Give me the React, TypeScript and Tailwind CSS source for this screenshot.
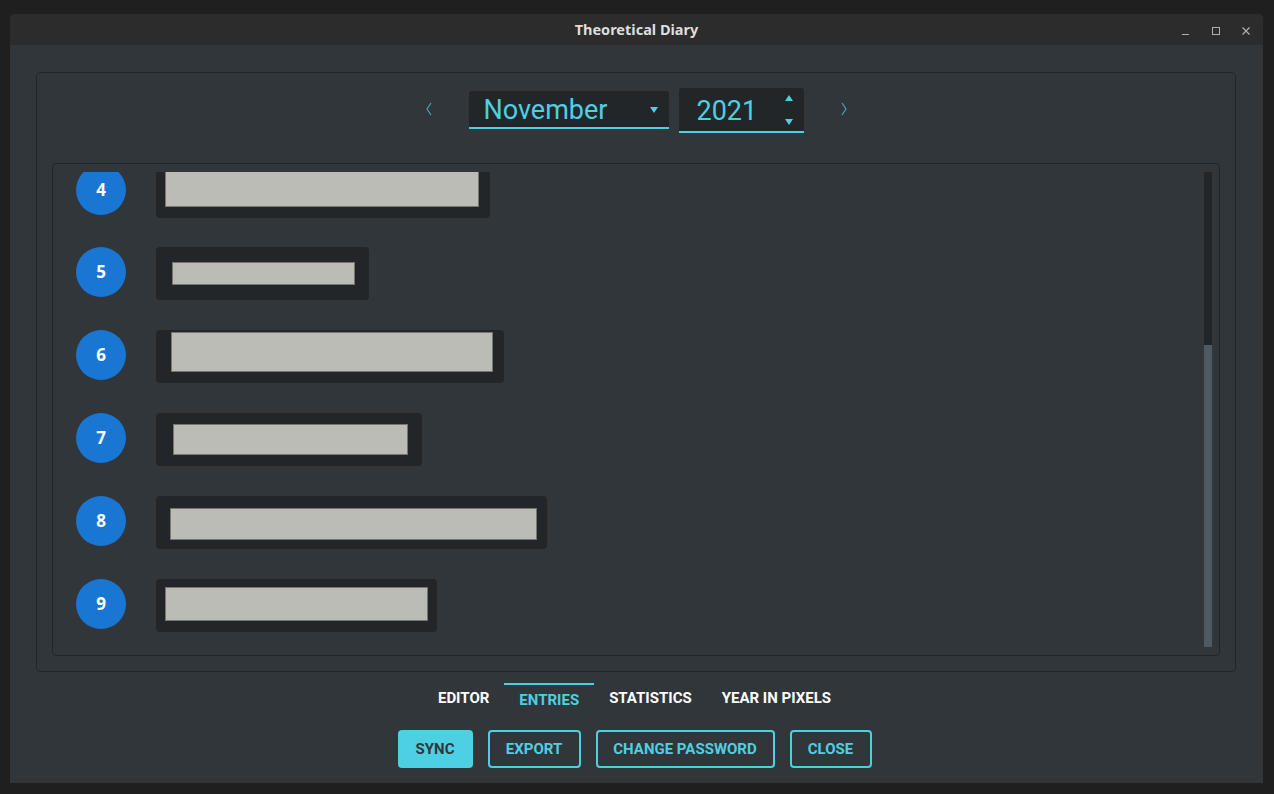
import React from "react";

const rows = [
  { n: 4, w: 334, rl: 9, rw: 314, rt: 6, rh: 36, mt: -7 },
  { n: 5, w: 213, rl: 16, rw: 183, rt: 15, rh: 23, mt: 29 },
  { n: 6, w: 348, rl: 15, rw: 322, rt: 2, rh: 40, mt: 30 },
  { n: 7, w: 266, rl: 17, rw: 235, rt: 11, rh: 31, mt: 30 },
  { n: 8, w: 391, rl: 14, rw: 367, rt: 12, rh: 32, mt: 30 },
  { n: 9, w: 281, rl: 9, rw: 263, rt: 8, rh: 34, mt: 30 },
];

const buttons = [
  { t: "SYNC", w: 75, filled: true },
  { t: "EXPORT", w: 93, filled: false },
  { t: "CHANGE PASSWORD", w: 179, filled: false },
  { t: "CLOSE", w: 82, filled: false },
];

const roboto = { fontFamily: "Roboto, 'Noto Sans', sans-serif" };

export default function App() {
  return (
    <div className="w-[1274px] h-[794px] bg-[#1f1f1f] pt-[14px] pl-[10px] overflow-hidden" style={roboto}>
      <div className="w-[1253px] h-[769px] flex flex-col rounded-t-[5px] overflow-hidden bg-[#31363b]">
        {/* Title bar */}
        <div className="h-[31px] bg-[#2c2c2c] relative flex items-center justify-center shrink-0">
          <span
            className="text-[14.5px] font-bold text-[#dedede] mt-[1px]"
            style={{ fontFamily: "'Noto Sans', 'DejaVu Sans', sans-serif" }}
          >
            Theoretical Diary
          </span>
          <div className="absolute right-[12px] top-0 h-full flex items-center gap-[20px] pt-[2px]">
            <svg width="10" height="10" viewBox="0 0 10 10">
              <line x1="1" y1="8.5" x2="8" y2="8.5" stroke="#b0b0b0" strokeWidth="1" />
            </svg>
            <svg width="10" height="10" viewBox="0 0 10 10">
              <rect x="1.5" y="1.5" width="7" height="7" fill="none" stroke="#b0b0b0" strokeWidth="1" />
            </svg>
            <svg width="10" height="10" viewBox="0 0 10 10">
              <path d="M1.5 1.5 L8.5 8.5 M8.5 1.5 L1.5 8.5" stroke="#b0b0b0" strokeWidth="1.2" />
            </svg>
          </div>
        </div>

        {/* Body */}
        <div className="flex-1 flex flex-col px-[26px] pt-[27px]">
          <div className="h-[600px] w-[1200px] border border-[#232629] rounded-[4px] flex flex-col px-[15px] pb-[15px]">
            {/* Header */}
            <div className="h-[90px] shrink-0 flex items-start justify-center">
              <div className="mt-[29px] mr-[36px]">
                <svg width="8" height="14" viewBox="0 0 8 14">
                  <polyline points="6,1 2,7 6,13" fill="none" stroke="#3fb0c0" strokeWidth="1.1" />
                </svg>
              </div>
              <div className="mt-[18px] w-[200px] h-[38px] bg-[#232629] rounded-t-[3px] border-b-2 border-[#4dd0e1] flex items-center pl-[15px] pr-[10px] relative">
                <span className="text-[27px] text-[#4dd0e1] leading-none mt-[3px]">November</span>
                <svg className="absolute right-[10px] top-[15px]" width="10" height="8" viewBox="0 0 10 8">
                  <polygon points="1,1 9,1 5,7" fill="#4dd0e1" />
                </svg>
              </div>
              <div className="mt-[15px] ml-[10px] w-[125px] h-[45px] bg-[#232629] rounded-t-[3px] border-b-2 border-[#4dd0e1] flex items-center pl-[18px] relative">
                <span className="text-[27px] text-[#4dd0e1] leading-none mt-[3px]">2021</span>
                <svg className="absolute right-[10px] top-[6px]" width="10" height="8" viewBox="0 0 10 8">
                  <polygon points="1,7 9,7 5,1" fill="#4dd0e1" />
                </svg>
                <svg className="absolute right-[10px] top-[30px]" width="10" height="8" viewBox="0 0 10 8">
                  <polygon points="1,1 9,1 5,7" fill="#4dd0e1" />
                </svg>
              </div>
              <div className="mt-[29px] ml-[36px]">
                <svg width="8" height="14" viewBox="0 0 8 14">
                  <polyline points="2,1 6,7 2,13" fill="none" stroke="#3fb0c0" strokeWidth="1.1" />
                </svg>
              </div>
            </div>

            {/* List frame */}
            <div className="flex-1 border border-[#232629] rounded-[4px] flex">
              <div className="flex-1 mt-[8px] h-[475px] overflow-hidden">
                <div className="flex flex-col pl-[23px]">
                  {rows.map((r) => (
                    <div key={r.n} className="flex items-start gap-[30px] h-[53px] shrink-0" style={{ marginTop: r.mt }}>
                      <div className="w-[50px] h-[50px] rounded-full bg-[#1976d2] flex items-center justify-center shrink-0">
                        <span
                          className="text-white font-bold text-[17px]"
                          style={{ fontFamily: "'Noto Sans', 'Open Sans', sans-serif" }}
                        >
                          {r.n}
                        </span>
                      </div>
                      <div
                        className="h-[53px] bg-[#232629] rounded-[4px] shrink-0"
                        style={{ width: r.w, paddingLeft: r.rl, paddingTop: r.rt }}
                      >
                        <div
                          className="bg-[#bbbcb5] border border-[#75766f]"
                          style={{ width: r.rw, height: r.rh }}
                        />
                      </div>
                    </div>
                  ))}
                </div>
              </div>
              <div className="w-[8px] h-[475px] mt-[8px] mr-[7px] bg-[#232629] flex flex-col">
                <div className="h-[173px]" />
                <div className="h-[302px] bg-[#4d5a63]" />
              </div>
            </div>
          </div>

          {/* Tabs */}
          <div className="flex justify-center mt-[11px] h-[30px] pr-[4px]">
            {["EDITOR", "ENTRIES", "STATISTICS", "YEAR IN PIXELS"].map((t) => {
              const active = t === "ENTRIES";
              return (
                <div
                  key={t}
                  className={
                    active
                      ? "px-[15px] border-t-2 border-[#4dd0e1] pt-[5px] text-[#4dd0e1] text-[15px] font-bold leading-[20px]"
                      : "px-[15px] border-t-2 border-transparent pt-[3px] text-white text-[15px] font-bold leading-[20px]"
                  }
                >
                  {t}
                </div>
              );
            })}
          </div>

          {/* Buttons */}
          <div className="flex justify-center gap-[15px] mt-[17px] pr-[4px]">
            {buttons.map((b) => (
              <button
                key={b.t}
                className={
                  b.filled
                    ? "h-[38px] rounded-[4px] bg-[#4dd0e1] text-[#31363b] text-[15px] font-bold flex items-center justify-center"
                    : "h-[38px] rounded-[4px] border-2 border-[#4dd0e1] text-[#4dd0e1] text-[15px] font-bold flex items-center justify-center"
                }
                style={{ width: b.w }}
              >
                {b.t}
              </button>
            ))}
          </div>
        </div>
      </div>
    </div>
  );
}
